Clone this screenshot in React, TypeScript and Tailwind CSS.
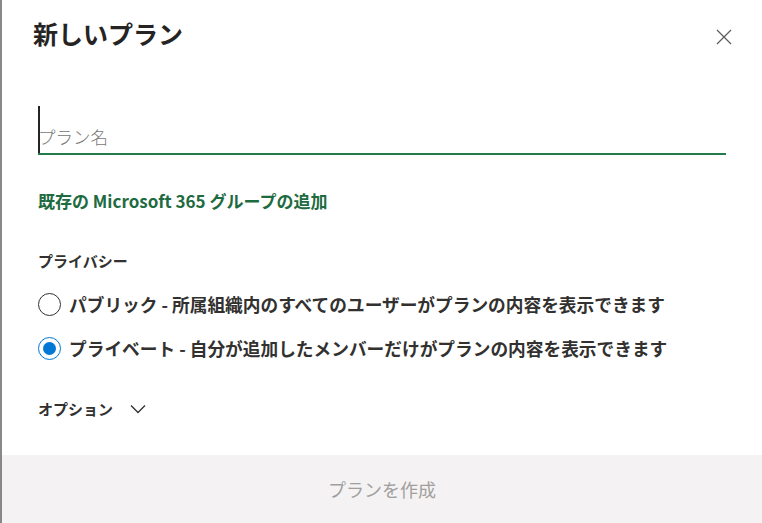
import React from "react";

const jp = { fontFamily: '"Noto Sans CJK JP", "Noto Sans", sans-serif' };

function Radio({ checked, label }: { checked?: boolean; label: string }) {
  return (
    <div className="flex items-center h-[24px]">
      <div
        className={
          "w-[23px] h-[23px] rounded-full border flex items-center justify-center shrink-0 " +
          (checked ? "border-[#0078d4]" : "border-[#323130]")
        }
      >
        {checked && <div className="w-[13px] h-[13px] rounded-full bg-[#0078d4]" />}
      </div>
      <span className="ml-[8px] text-[17.7px] leading-[24px] font-semibold text-[#323130] whitespace-nowrap">
        {label}
      </span>
    </div>
  );
}

export default function App() {
  return (
    <div className="w-[762px] h-[523px] flex bg-white overflow-hidden" style={jp}>
      <div className="w-[2px] h-full bg-[#8a8886]" />
      <div className="flex-1 flex flex-col bg-white">
        <div className="flex items-start justify-between pl-[31px] pr-[30px] pt-[17px]">
          <h1 className="text-[25px] leading-[33px] font-bold text-[#252423]">新しいプラン</h1>
          <button className="mt-[12px] w-[16px] h-[16px] flex items-center justify-center text-[#605e5c]">
            <svg width="16" height="16" viewBox="0 0 16 16" fill="none">
              <path d="M1 1 L15 15 M15 1 L1 15" stroke="#605e5c" strokeWidth="1.3" />
            </svg>
          </button>
        </div>

        <div className="px-[36px] flex flex-col">
          <div className="relative mt-[56px] h-[49px] border-b-2 border-[#237b4b] flex items-end pb-[4px]">
            <div className="absolute left-0 top-0 w-[2px] h-[47px] bg-[#252423]" />
            <span className="text-[17.5px] leading-[24px] text-[#797775] font-light">プラン名</span>
          </div>

          <div className="mt-[34px] text-[17px] leading-[24px] font-semibold text-[#1e6b41]">
            既存の Microsoft 365 グループの追加
          </div>

          <div className="mt-[38px] text-[15px] leading-[20px] font-semibold text-[#323130]">
            プライバシー
          </div>

          <div className="mt-[21px]">
            <Radio label="パブリック - 所属組織内のすべてのユーザーがプランの内容を表示できます" />
          </div>
          <div className="mt-[20px]">
            <Radio checked label="プライベート - 自分が追加したメンバーだけがプランの内容を表示できます" />
          </div>

          <div className="mt-[38px] flex items-center h-[22px]">
            <span className="text-[15px] leading-[22px] font-bold text-[#323130]">オプション</span>
            <svg className="ml-[17px]" width="16" height="10" viewBox="0 0 16 10" fill="none">
              <path d="M1 1.5 L8 8.5 L15 1.5" stroke="#323130" strokeWidth="1.3" />
            </svg>
          </div>
        </div>

        <div className="flex-1" />

        <div className="h-[68px] bg-[#f4f2f2] flex items-center justify-center">
          <span className="text-[18px] leading-[24px] text-[#a19f9d]">プランを作成</span>
        </div>
      </div>
    </div>
  );
}
